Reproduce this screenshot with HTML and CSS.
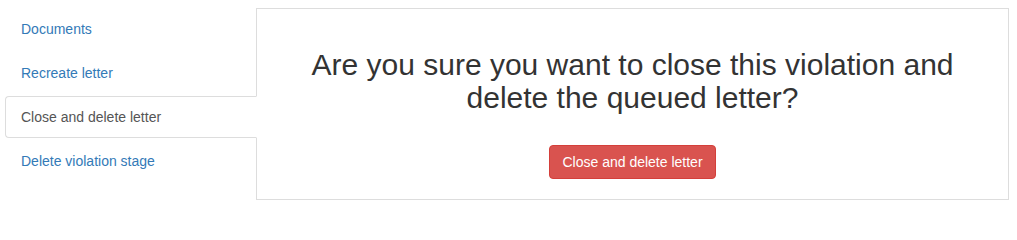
FILE: index.html
```html
<!DOCTYPE html>
<html>
<head>
<meta charset="utf-8">
<link rel="stylesheet" href="styles.css">
</head>
<body>
<div class="layout">
  <ul class="tabs">
    <li class="tab"><a href="#">Documents</a></li>
    <li class="tab"><a href="#">Recreate letter</a></li>
    <li class="tab active"><a href="#">Close and delete letter</a></li>
    <li class="tab"><a href="#">Delete violation stage</a></li>
  </ul>
  <div class="panel">
    <h2 class="question">Are you sure you want to close this violation and delete the queued letter?</h2>
    <div class="actions">
      <button class="btn-danger" type="button">Close and delete letter</button>
    </div>
  </div>
</div>
</body>
</html>
```
FILE: styles.css
```css
* { box-sizing: border-box; }
html, body { margin: 0; padding: 0; background: #fff; }
body {
  font-family: "Liberation Sans", Arial, sans-serif;
  font-size: 14px;
  line-height: 20px;
  color: #333;
}
.layout {
  display: flex;
  align-items: flex-start;
  padding: 8px 0 0 5px;
}
.tabs {
  list-style: none;
  margin: 0 -1px 0 0;
  padding: 0;
  width: 252px;
  flex: none;
  display: flex;
  flex-direction: column;
  gap: 2px;
  position: relative;
  z-index: 1;
}
.tab a {
  display: block;
  padding: 10px 15px;
  border: 1px solid transparent;
  border-radius: 4px 0 0 4px;
  color: #337ab7;
  text-decoration: none;
}
.tab.active a {
  color: #555;
  background: #fff;
  border-color: #ddd;
  border-right-color: transparent;
}
.panel {
  width: 753px;
  height: 192px;
  border: 1px solid #ddd;
  padding: 20px 40px;
  text-align: center;
}
.question {
  margin: 19px auto 0;
  font-size: 30px;
  font-weight: 500;
  line-height: 33px;
  color: #333;
  max-width: 660px;
}
.actions {
  margin-top: 31px;
}
.btn-danger {
  font-family: "Liberation Sans", Arial, sans-serif;
  font-size: 14px;
  line-height: 20px;
  padding: 6px 12px;
  color: #fff;
  background: #d9534f;
  border: 1px solid #d43f3a;
  border-radius: 4px;
  cursor: pointer;
}
```
